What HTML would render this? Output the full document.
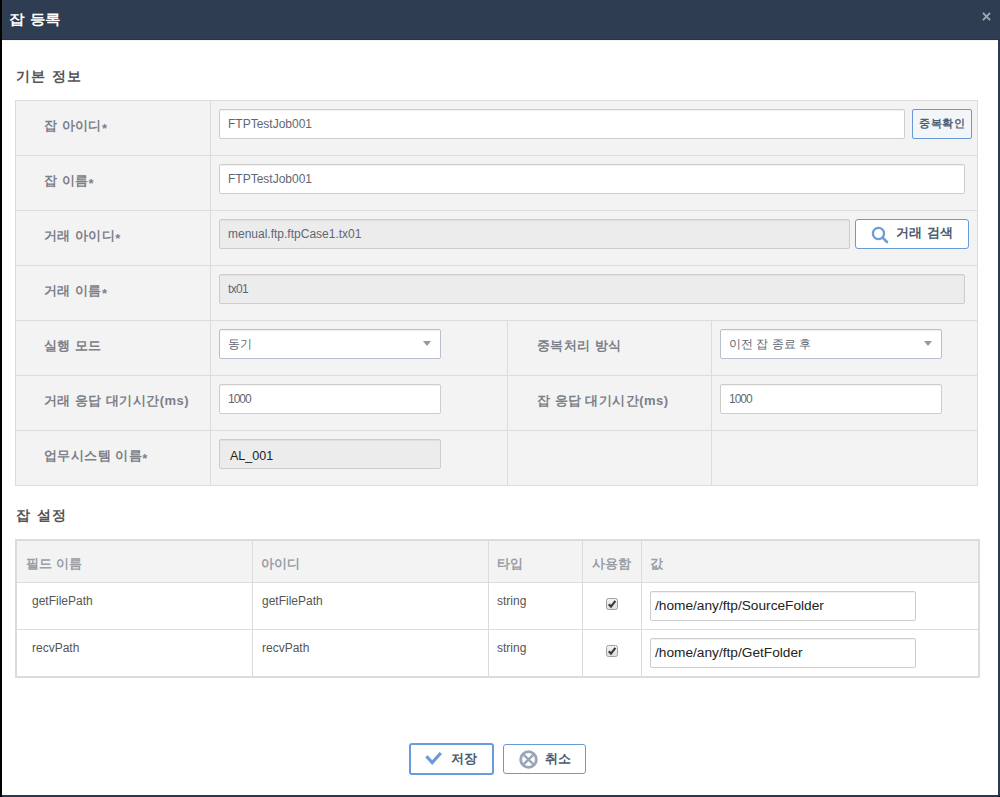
<!DOCTYPE html>
<html lang="ko">
<head>
<meta charset="utf-8">
<style>
*{box-sizing:border-box;margin:0;padding:0}
html,body{width:1000px;height:797px;overflow:hidden;background:#000}
body{font-family:"Liberation Sans",sans-serif;position:relative}
.abs{position:absolute}
#dlg{position:absolute;left:2px;top:0;width:998px;height:797px;background:#fff;border-right:2px solid #2b3a4f;border-bottom:2px solid #2b3a4f;border-bottom-right-radius:3px}
#hdr{position:absolute;left:2px;top:0;width:998px;height:40px;background:#2e3d52;border-bottom:1px solid #25344a}
#hl40{position:absolute;left:2px;top:40px;width:996px;height:1px;background:#f4f3f1}
#hdr .t{position:absolute;left:7px;top:9px;font-size:15px;font-weight:bold;color:#fff;line-height:20px;letter-spacing:0;word-spacing:2px;transform:scaleY(0.9);transform-origin:0 50%}
#hdr .x{position:absolute;left:979px;top:11px;width:10px;height:10px}
.sec{position:absolute;font-size:14px;font-weight:bold;color:#555;line-height:18px;letter-spacing:1.4px}
.hl{position:absolute;height:1px;background:#dcdcdc}
.vl{position:absolute;width:1px;background:#dcdcdc}
.lbl{position:absolute;font-size:13px;font-weight:bold;color:#7c8089;line-height:16px;white-space:nowrap;letter-spacing:0.45px}
.inp{position:absolute;height:30px;border:1px solid #cdcdcd;border-radius:2px;box-shadow:inset 0 1px 1px rgba(0,0,0,.06);background:#fff;font-size:12px;color:#5f6773;line-height:28px;padding-left:8px;white-space:nowrap}
.dis{background:#ececec}
.sel{border-color:#b8c0cf}
.arr{position:absolute;width:0;height:0;border-left:4px solid transparent;border-right:4px solid transparent;border-top:5px solid #9298aa}
.btn{position:absolute;border:1px solid #6a9ad6;border-radius:3px;background:#fff;font-size:13px;font-weight:bold;color:#4c5a6f;white-space:nowrap}
.gh{position:absolute;font-size:13px;font-weight:bold;color:#9a9ea6;line-height:16px;white-space:nowrap}
.gc{position:absolute;font-size:12px;color:#555;line-height:14px;white-space:nowrap}
</style>
</head>
<body>
<div id="dlg"></div>
<div id="hl40"></div>
<div id="hdr"><div class="t">잡 등록</div>
<svg class="x" viewBox="0 0 10 10"><path d="M1.9 1.9L9.1 9.1M9.1 1.9L1.9 9.1" stroke="#a3a6ab" stroke-width="1.9"/></svg>
</div>

<div class="sec" style="left:16px;top:67px">기본 정보</div>

<!-- form table -->
<div class="abs" style="left:15px;top:100px;width:963px;height:386px;background:#f3f3f3;border:1px solid #dcdcdc"></div>
<div class="hl" style="left:15px;top:155px;width:963px"></div>
<div class="hl" style="left:15px;top:210px;width:963px"></div>
<div class="hl" style="left:15px;top:265px;width:963px"></div>
<div class="hl" style="left:15px;top:320px;width:963px"></div>
<div class="hl" style="left:15px;top:375px;width:963px"></div>
<div class="hl" style="left:15px;top:430px;width:963px"></div>
<div class="vl" style="left:210px;top:100px;height:386px"></div>
<div class="vl" style="left:507px;top:320px;height:166px"></div>
<div class="vl" style="left:711px;top:320px;height:166px"></div>

<div class="lbl" style="left:44px;top:118px">잡 아이디<span style="position:relative;top:3px">*</span></div>
<div class="lbl" style="left:44px;top:173px">잡 이름<span style="position:relative;top:3px">*</span></div>
<div class="lbl" style="left:44px;top:228px">거래 아이디<span style="position:relative;top:3px">*</span></div>
<div class="lbl" style="left:44px;top:283px">거래 이름<span style="position:relative;top:3px">*</span></div>
<div class="lbl" style="left:44px;top:338px">실행 모드</div>
<div class="lbl" style="left:44px;top:393px">거래 응답 대기시간(ms)</div>
<div class="lbl" style="left:44px;top:448px">업무시스템 이름<span style="position:relative;top:3px">*</span></div>
<div class="lbl" style="left:537px;top:338px">중복처리 방식</div>
<div class="lbl" style="left:537px;top:393px">잡 응답 대기시간(ms)</div>

<div class="inp" style="left:219px;top:109px;width:686px">FTPTestJob001</div>
<div class="btn" style="left:912px;top:109px;width:60px;height:30px;background:#f3f6f9;font-size:11px;line-height:27px;text-align:center;letter-spacing:0.8px;text-indent:0.8px;color:#4b5f76;border-radius:2px">중복확인</div>
<div class="inp" style="left:219px;top:164px;width:746px">FTPTestJob001</div>
<div class="inp dis" style="left:219px;top:219px;width:631px">menual.ftp.ftpCase1.tx01</div>
<div class="btn" style="left:855px;top:219px;width:114px;height:30px;line-height:28px">
<svg class="abs" style="left:14px;top:5px" width="20" height="20" viewBox="0 0 20 20"><circle cx="8.5" cy="8.5" r="5.6" fill="none" stroke="#6f9bd3" stroke-width="2.3"/><path d="M12.6 12.6L17 17" stroke="#6f9bd3" stroke-width="2.6" stroke-linecap="round"/></svg>
<span class="abs" style="left:40px;top:-1px;letter-spacing:0.3px">거래 검색</span></div>
<div class="inp dis" style="left:219px;top:274px;width:746px;letter-spacing:-0.7px">tx01</div>

<div class="inp sel" style="left:219px;top:329px;width:222px">동기</div>
<div class="arr" style="left:423px;top:341px"></div>
<div class="inp sel" style="left:720px;top:329px;width:222px">이전 잡 종료 후</div>
<div class="arr" style="left:924px;top:341px"></div>
<div class="inp" style="left:219px;top:384px;width:222px;letter-spacing:-1px">1000</div>
<div class="inp" style="left:720px;top:384px;width:222px;letter-spacing:-1px">1000</div>
<div class="inp dis" style="left:219px;top:439px;width:222px;font-size:12.5px;color:#222;padding-left:10px;line-height:32px">AL_001</div>

<div class="sec" style="left:16px;top:506px">잡 설정</div>

<!-- grid -->
<div class="abs" style="left:15px;top:539px;width:965px;height:139px;background:#fff;border:2px solid #dcdcdc"></div>
<div class="abs" style="left:17px;top:541px;width:961px;height:41px;background:#f3f3f3"></div>
<div class="hl" style="left:17px;top:582px;width:961px"></div>
<div class="hl" style="left:17px;top:629px;width:961px"></div>
<div class="vl" style="left:252px;top:541px;height:135px"></div>
<div class="vl" style="left:488px;top:541px;height:135px"></div>
<div class="vl" style="left:582px;top:541px;height:135px"></div>
<div class="vl" style="left:641px;top:541px;height:135px"></div>

<div class="gh" style="left:26px;top:556px">필드 이름</div>
<div class="gh" style="left:261px;top:556px">아이디</div>
<div class="gh" style="left:497px;top:556px">타입</div>
<div class="gh" style="left:592px;top:556px">사용함</div>
<div class="gh" style="left:650px;top:556px">값</div>

<div class="gc" style="left:32px;top:594px">getFilePath</div>
<div class="gc" style="left:262px;top:594px">getFilePath</div>
<div class="gc" style="left:497px;top:594px">string</div>
<div class="gc" style="left:32px;top:641px">recvPath</div>
<div class="gc" style="left:262px;top:641px">recvPath</div>
<div class="gc" style="left:497px;top:641px">string</div>

<svg class="abs" style="left:606px;top:598px" width="12" height="12" viewBox="0 0 12 12"><defs><linearGradient id="cg598" x1="0" y1="0" x2="0" y2="1"><stop offset="0" stop-color="#f4f4f4"/><stop offset="1" stop-color="#dedede"/></linearGradient></defs><rect x="0.5" y="0.5" width="11" height="11" rx="2" fill="url(#cg598)" stroke="#a0a0a0"/><path d="M2.8 6.2L5 8.6L9.4 2.8" fill="none" stroke="#3a3a3a" stroke-width="2.2"/></svg>
<svg class="abs" style="left:606px;top:645px" width="12" height="12" viewBox="0 0 12 12"><defs><linearGradient id="cg645" x1="0" y1="0" x2="0" y2="1"><stop offset="0" stop-color="#f4f4f4"/><stop offset="1" stop-color="#dedede"/></linearGradient></defs><rect x="0.5" y="0.5" width="11" height="11" rx="2" fill="url(#cg645)" stroke="#a0a0a0"/><path d="M2.8 6.2L5 8.6L9.4 2.8" fill="none" stroke="#3a3a3a" stroke-width="2.2"/></svg>

<div class="inp" style="left:650px;top:591px;width:266px;font-size:13.7px;color:#222;padding-left:4px;line-height:27px">/home/any/ftp/SourceFolder</div>
<div class="inp" style="left:650px;top:638px;width:266px;font-size:13.7px;color:#222;padding-left:4px;line-height:27px">/home/any/ftp/GetFolder</div>

<!-- bottom buttons -->
<div class="btn" style="left:409px;top:743px;width:85px;height:32px;border:2px solid #6a9be2">
<svg class="abs" style="left:14px;top:6px" width="18" height="14" viewBox="0 0 18 14"><path d="M1.4 5.2L7.2 11.6L15.8 2" fill="none" stroke="#6a9bd8" stroke-width="3.2"/></svg>
<span class="abs" style="left:40px;top:6px;line-height:16px;letter-spacing:0.3px">저장</span></div>
<div class="btn" style="left:503px;top:744px;width:83px;height:30px">
<svg class="abs" style="left:13.5px;top:3.5px" width="21" height="21" viewBox="0 0 21 21"><circle cx="10.5" cy="10.5" r="7.8" fill="none" stroke="#9aa6b6" stroke-width="2.8"/><path d="M5.3 5.3L15.7 15.7M15.7 5.3L5.3 15.7" stroke="#9aa6b6" stroke-width="2.4"/></svg>
<span class="abs" style="left:40.5px;top:5.5px;line-height:16px;letter-spacing:0.3px">취소</span></div>
</body>
</html>
